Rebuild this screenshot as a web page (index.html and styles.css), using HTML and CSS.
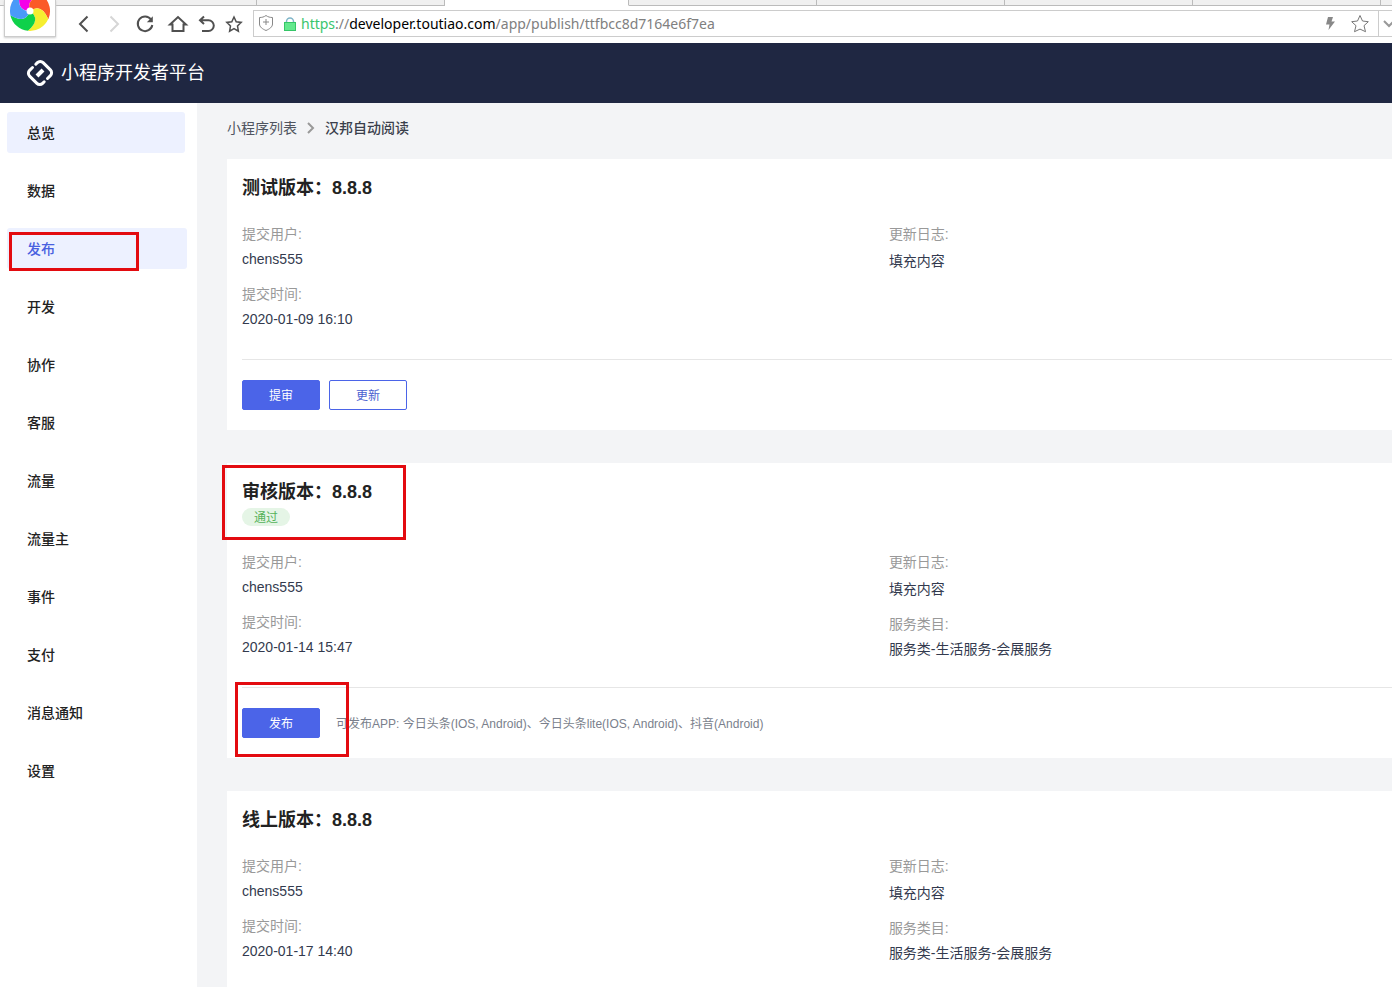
FILE: index.html
```html
<!DOCTYPE html>
<html lang="zh-CN">
<head>
<meta charset="utf-8">
<title>小程序开发者平台</title>
<link rel="stylesheet" href="styles.css">
</head>
<body>
<div class="browser">
  <div class="tabs">
    <span class="tab tab-first"></span><span class="tab"></span><span class="tab tab-active"></span><span class="tab"></span><span class="tab"></span><span class="tab"></span><span class="tab"></span><span class="tab tab-last"></span>
  </div>
  <div class="toolbar">
    <div class="tools">
      <button class="tool" aria-label="后退"><svg width="20" height="20" viewBox="0 0 20 20"><path d="M13.500 2.500 6 10l7.500 7.500"/></svg></button>
      <button class="tool tool-off" aria-label="前进"><svg width="20" height="20" viewBox="0 0 20 20"><path d="M6.500 2.500 14 10l-7.500 7.500"/></svg></button>
      <button class="tool" aria-label="刷新"><svg width="20" height="20" viewBox="-1 0 20 20"><path d="M16 5.500A7.300 7.300 0 1 0 17.300 11"/><path class="solid" d="M17.800 2.200v6h-6z"/></svg></button>
      <button class="tool" aria-label="主页"><svg width="20" height="20" viewBox="-4 0 20 20"><path d="M2 10.500 10 3l8 7.500h-2.500V17h-11v-6.500z"/></svg></button>
      <button class="tool" aria-label="撤销"><svg width="20" height="20" viewBox="-3 0 20 20"><path d="M7 2.500 3 6.300 7 10M3 6.300h8.500a5.300 5.300 0 0 1 0 10.600H5"/></svg></button>
      <button class="tool" aria-label="收藏夹"><svg width="20" height="20" viewBox="0 0 20 20"><path class="thin" d="m10 3 2.200 4.700 5 .7-3.700 3.500.9 5.300L10 14.600l-4.400 2.600.9-5.300-3.700-3.500 5-.7z"/></svg></button>
    </div>
    <div class="address">
      <svg class="shield" width="16" height="18" viewBox="0 1 16 18"><path d="M8 1.500C6 3 4 3.500 1.500 3.500V10c0 3 3 5 6.500 6.500 3.500-1.500 6.500-3.500 6.500-6.500V3.500C12 3.500 10 3 8 1.500zM8 5v6M5 8h6"/></svg>
      <svg class="lock" width="12" height="14" viewBox="0 0 12 14"><path class="shackle" d="M2.500 6V4.500a3.500 3.500 0 0 1 7 0V6"/><rect x=".5" y="5.500" width="11" height="8"/></svg>
      <div class="url" role="textbox" contenteditable="true" spellcheck="false" aria-label="地址"><span class="url-scheme">https</span>://<span class="url-host">developer.toutiao.com</span>/app/publish/ttfbcc8d7164e6f7ea</div>
      <button class="mini" aria-label="加速"><svg width="12" height="16" viewBox="0 0 12 16"><path class="bolt" d="M4 1h5L7.500 5.500H11L4.500 14l1-5.500H2z"/></svg></button>
      <button class="mini star" aria-label="收藏"><svg width="20" height="20" viewBox="0 0 20 20"><path d="m10 1.500 2.500 5.500 5.800.7-4.300 4 1.500 6-5.500-2.600-5.500 2.600 1.500-6-4.300-4 5.800-.7z"/></svg></button>
      <button class="mini drop" aria-label="展开"><svg width="14" height="10" viewBox="0 0 14 10"><path d="m2 2 5 5 5-5"/></svg></button>
    </div>
  </div>
  <div class="badge"><svg width="44" height="44" viewBox="-22 -22 44 44">
    <defs><path id="petal" d="M0 0Q-14 0-10-17.300A20 20 0 0 1 13.400-14.900Q-4.300-13.300 0 0z"/></defs>
    <use href="#petal" fill="#f500e8"/><use href="#petal" fill="#fb5a28" transform="rotate(72)"/><use href="#petal" fill="#f6ee30" transform="rotate(144)"/><use href="#petal" fill="#0fd14a" transform="rotate(216)"/><use href="#petal" fill="#4a9af8" transform="rotate(288)"/>
    <circle r="3.500" fill="#fff"/>
  </svg></div>
</div>
<header class="header">
  <svg width="28" height="28" viewBox="0 0 28 28"><path id="link" d="m9.800 5.200 1.600-1.600a4 4 0 0 1 5.700 0L24.400 10.900a4 4 0 0 1 0 5.700L21.500 19.500"/><use href="#link" transform="rotate(180 14 14)"/><path class="pin" d="m11 17 6-6"/></svg>
  <span>小程序开发者平台</span>
</header>
<div class="layout">
  <nav class="side">
    <a class="item item-hover" href="#">总览</a>
    <a class="item" href="#">数据</a>
    <a class="item item-active" href="#">发布<span class="mark mark-nav"></span></a>
    <a class="item" href="#">开发</a>
    <a class="item" href="#">协作</a>
    <a class="item" href="#">客服</a>
    <a class="item" href="#">流量</a>
    <a class="item" href="#">流量主</a>
    <a class="item" href="#">事件</a>
    <a class="item" href="#">支付</a>
    <a class="item" href="#">消息通知</a>
    <a class="item" href="#">设置</a>
  </nav>
  <main class="main">
    <div class="crumbs"><a href="#">小程序列表</a><svg width="8" height="12" viewBox="0 0 8 12"><path d="m1 1 5 5-5 5"/></svg><strong>汉邦自动阅读</strong></div>
    <section class="card">
      <div class="head"><h2>测试版本：8.8.8</h2></div>
      <div class="fields">
        <dl><dt>提交用户:</dt><dd>chens555</dd><dt>提交时间:</dt><dd>2020-01-09 16:10</dd></dl>
        <dl><dt>更新日志:</dt><dd class="log">填充内容</dd></dl>
      </div>
      <div class="actions"><button class="btn btn-main">提审</button><button class="btn">更新</button></div>
    </section>
    <section class="card">
      <div class="head head-tagged"><h2>审核版本：8.8.8</h2><span class="tag">通过</span><span class="mark mark-head"></span></div>
      <div class="fields">
        <dl><dt>提交用户:</dt><dd>chens555</dd><dt>提交时间:</dt><dd>2020-01-14 15:47</dd></dl>
        <dl><dt>更新日志:</dt><dd class="log">填充内容</dd><dt>服务类目:</dt><dd>服务类-生活服务-会展服务</dd></dl>
      </div>
      <div class="actions"><button class="btn btn-main">发布</button><span class="note">可发布APP: 今日头条(IOS, Android)、今日头条lite(IOS, Android)、抖音(Android)</span><span class="mark mark-publish"></span></div>
    </section>
    <section class="card">
      <div class="head"><h2>线上版本：8.8.8</h2></div>
      <div class="fields">
        <dl><dt>提交用户:</dt><dd>chens555</dd><dt>提交时间:</dt><dd>2020-01-17 14:40</dd></dl>
        <dl><dt>更新日志:</dt><dd class="log">填充内容</dd><dt>服务类目:</dt><dd>服务类-生活服务-会展服务</dd></dl>
      </div>
    </section>
  </main>
</div>
</body>
</html>
```
FILE: styles.css
```css
* { box-sizing: border-box; }
body {
  display: flex;
  flex-direction: column;
  height: 100vh;
  margin: 0;
  overflow: hidden;
  background: #fff;
  font: 14px/20px "Liberation Sans", "Noto Sans CJK SC", sans-serif;
  color: #333a4e;
}
svg { display: block; flex: none; fill: none; overflow: visible; }
a { color: inherit; text-decoration: none; }
button { padding: 0; border: 0; background: none; font: inherit; cursor: pointer; }

.browser { position: relative; flex: none; }
.tabs { display: flex; height: 6px; overflow: hidden; }
.tab { flex: none; width: 188px; background: #f0f0f0; border-right: 1px solid #bbb; border-bottom: 1px solid #bbb; }
.tab-first { width: 257px; }
.tab-active { width: 184px; background: #fff; border-bottom-color: #fff; }
.tab-last { flex: 1; border-right: 0; }
.toolbar { display: flex; align-items: center; height: 37px; padding: 0 0 2px 74px; }
.tools { display: flex; gap: 10px; width: 179px; }
.tool { width: 20px; height: 20px; stroke: #505050; stroke-width: 2; }
.tool-off { stroke: #d6d6d6; }
.tool .solid { fill: #505050; stroke: none; }
.tool .thin { stroke-width: 1.5; }
.address { display: flex; flex: 1; align-items: center; height: 27px; padding-left: 4px; border: 1px solid #ccc; border-right: 0; }
.shield { stroke: #888; }
.lock { margin: 0 5px 0 10px; fill: #63e88d; stroke: #35c567; }
.lock .shackle { fill: none; stroke: #7fb5c8; stroke-width: 1.5; }
.url { flex: 1; font: 14px/20px "Noto Sans", sans-serif; color: #808080; white-space: nowrap; outline: 0; }
.url-scheme { color: #3ac56e; }
.url-host { color: #000; }
.mini { stroke: #777; }
.bolt { fill: #888; stroke: none; }
.star { margin: 0 8px 0 14px; }
.drop { align-self: stretch; width: 14px; padding-left: 3px; overflow: hidden; border-left: 1px solid #ccc; stroke: #999; stroke-width: 2; }
.badge { position: absolute; top: 0; left: 4px; width: 52px; height: 37px; overflow: hidden; background: #fff; border: 1px solid #ccc; border-top: 0; box-shadow: 0 1px 2px #ccc; }
.badge svg { margin: -11px 0 0 3px; }

.header { display: flex; flex: none; align-items: center; gap: 7px; height: 60px; padding-left: 26px; background: #1f2742; color: #fff; font-size: 18px; }
.header svg { stroke: #fff; stroke-width: 3; stroke-linecap: round; }
.header .pin { stroke-width: 4; stroke-linecap: butt; }

.layout { display: flex; flex: 1; min-height: 0; }
.side { display: flex; flex: none; flex-direction: column; gap: 17px; width: 197px; padding: 9px 10px 0 7px; }
.item { position: relative; height: 41px; padding-left: 20px; border-radius: 3px; font-weight: 500; line-height: 43px; color: #222; }
.item-hover { margin-right: 2px; background: #edf1ff; }
.item-active { background: #edf1ff; color: #4860e0; }

.main { flex: 1; min-width: 0; padding: 15px 0 0 30px; overflow: hidden; background: #f3f4f6; }
.crumbs { display: flex; align-items: center; gap: 10px; margin-bottom: 21px; color: #50555f; }
.crumbs svg { stroke: #999; stroke-width: 2; }
.crumbs strong { font-weight: 500; color: #3a3f4c; }
.card { margin-bottom: 33px; padding: 15px 0 0 15px; background: #fff; }
.head { position: relative; padding-bottom: 22px; }
.head-tagged { padding-bottom: 26px; }
h2 { margin: 0; font-size: 18px; line-height: 28px; color: #222; }
.tag { display: block; width: 48px; height: 18px; margin-top: 2px; border-radius: 9px; background: #e5f5e6; font-size: 12px; line-height: 20px; text-align: center; color: #55b25a; }
.fields { display: grid; grid-template-columns: 9fr 7fr; min-height: 135px; }
dl, dd { margin: 0; }
dt { color: #999; }
dd { margin: 5px 0 15px; }
dd.log { margin-top: 7px; }
.actions { position: relative; display: flex; align-items: center; gap: 9px; padding: 20px 0; border-top: 1px solid #e6e6e6; }
.btn { width: 78px; height: 30px; padding-top: 2px; border: 1px solid #4b64e8; border-radius: 2px; font-size: 12px; line-height: 20px; color: #4b5fd0; }
.btn-main { background: #4b64e8; color: #fff; }
.note { padding: 2px 0 0 7px; font-size: 12px; color: #7a7f8c; }

.mark { position: absolute; border: 3px solid #e30b10; pointer-events: none; }
.mark-nav { top: 4px; left: 2px; width: 130px; height: 39px; }
.mark-head { top: -13px; left: -20px; width: 184px; height: 75px; }
.mark-publish { top: -6px; left: -7px; width: 114px; height: 75px; }
```
